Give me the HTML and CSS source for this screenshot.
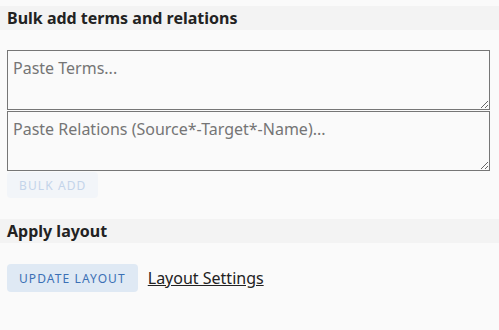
FILE: index.html
```html
<!DOCTYPE html>
<html lang="en">
<head>
    <meta charset="UTF-8">
    <title>Bulk add</title>
    <link rel="stylesheet" href="styles.css">
</head>
<body>
    <div class="panel">
        <h3 class="section-title">Bulk add terms and relations</h3>
        <div class="section-body bulk">
            <textarea class="bulk-input" placeholder="Paste Terms..."></textarea>
            <textarea class="bulk-input" placeholder="Paste Relations (Source*-Target*-Name)..."></textarea>
            <div>
                <button class="btn" disabled>Bulk Add</button>
            </div>
        </div>

        <h3 class="section-title">Apply layout</h3>
        <div class="section-body layout-row">
            <button class="btn">Update Layout</button>
            <a href="#" class="link">Layout Settings</a>
        </div>
    </div>
</body>
</html>
```

FILE: styles.css
```css
body {
    margin: 0;
    padding: 0;
    background-color: #fafafa;
    font-family: 'Noto Sans', sans-serif;
    color: #222;
}

.panel {
    padding-top: 6px;
}

.section-title {
    margin: 0;
    background-color: #f3f3f3;
    height: 24px;
    line-height: 24px;
    padding: 0 7px;
    font-size: 16px;
    font-weight: 700;
    color: #222;
}

.section-body {
    padding: 0 7px;
}

.bulk {
    padding-top: 20px;
    padding-bottom: 21px;
}

.bulk-input {
    display: block;
    box-sizing: border-box;
    width: 483px;
    height: 60px;
    margin: 0 0 1px 0;
    padding: 6px 5px;
    border: 1px solid #767676;
    background-color: #fafafa;
    font-family: 'Noto Sans', sans-serif;
    font-size: 16px;
    color: #222;
}

.bulk-input::placeholder {
    color: #757575;
}

.btn {
    font-family: 'Noto Sans', sans-serif;
    text-transform: uppercase;
    font-size: 12px;
    letter-spacing: 1.1px;
    border: none;
    border-radius: 4px;
    padding: 0 12px;
    height: 28px;
    background-color: #dfe9f4;
    color: #3b70b5;
    cursor: pointer;
}

.btn:disabled {
    background-color: #f2f5f9;
    color: #c4d4ea;
    cursor: default;
    height: 26px;
}

.layout-row {
    display: flex;
    align-items: center;
    gap: 10px;
    padding-top: 21px;
}

.link {
    color: #222;
    font-size: 16px;
    text-decoration: underline;
}
```
